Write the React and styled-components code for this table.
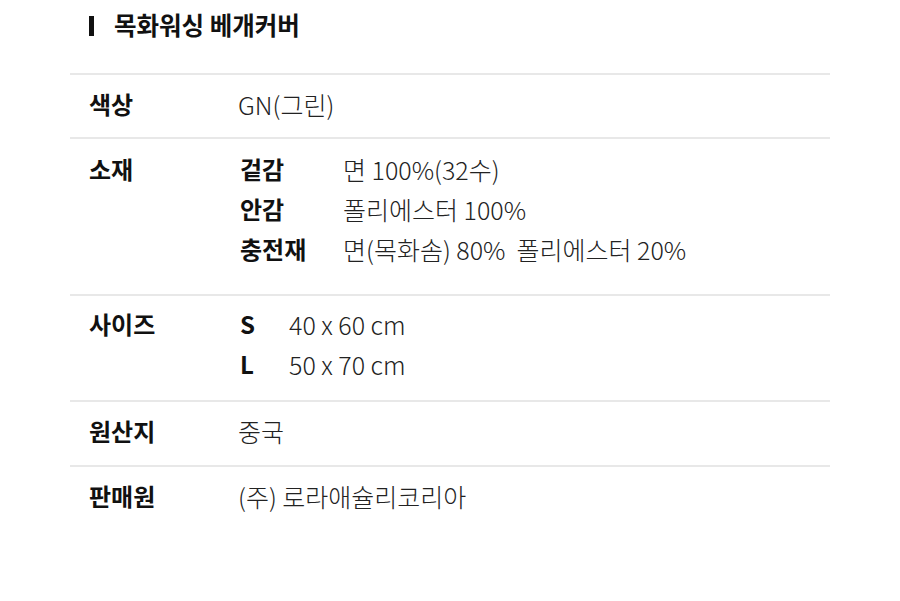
import React from "react";
import styled, { createGlobalStyle } from "styled-components";

const GlobalStyle = createGlobalStyle`
  body {
    margin: 0;
    background: #fff;
    font-family: "Noto Sans CJK KR", "Noto Sans", sans-serif;
    color: #111;
  }
`;

const Page = styled.section`
  width: 900px;
  padding: 0 70px;
  box-sizing: border-box;
`;

const Title = styled.h2`
  margin: 0;
  height: 73px;
  display: flex;
  align-items: flex-start;
  padding: 8px 0 0 19px;
  box-sizing: border-box;
  font-size: 24.5px;
  font-weight: 700;
  line-height: 34px;
  color: #111;

  &::before {
    content: "";
    width: 5px;
    height: 20px;
    margin-top: 8px;
    margin-right: 20px;
    background: #111;
  }
`;

const Table = styled.div`
  border-top: 2px solid #e8e8e8;
`;

const Row = styled.div`
  display: grid;
  grid-template-columns: 149px 1fr;
  padding: ${(p) => p.$top || 8}px 19px ${(p) => p.$bottom || 14}px;
  border-bottom: 2px solid #e8e8e8;
  font-size: 24px;
  line-height: 40px;

  &:last-child {
    border-bottom: none;
  }
`;

const Label = styled.div`
  font-weight: 700;
  color: #111;
`;

const Value = styled.div`
  font-size: 25px;
  font-weight: 300;
  color: #222;
  white-space: pre;
`;

const SubList = styled.div`
  display: grid;
  grid-template-columns: ${(p) => p.$col}px 1fr;
  padding-left: ${(p) => p.$indent || 0}px;
`;

const SubLabel = styled.div`
  font-weight: 700;
  color: #111;
`;

const materials = [
  ["겉감", "면 100%(32수)"],
  ["안감", "폴리에스터 100%"],
  ["충전재", "면(목화솜) 80%  폴리에스터 20%"],
];

const sizes = [
  ["S", "40 x 60 cm"],
  ["L", "50 x 70 cm"],
];

export default function App() {
  return (
    <Page>
      <GlobalStyle />
      <Title>목화워싱 베개커버</Title>
      <Table>
        <Row $top={9} $bottom={13}>
          <Label>색상</Label>
          <Value>GN(그린)</Value>
        </Row>
        <Row $top={10} $bottom={25}>
          <Label>소재</Label>
          <SubList $col={103} $indent={2}>
            {materials.map(([k, v]) => (
              <React.Fragment key={k}>
                <SubLabel>{k}</SubLabel>
                <Value>{v}</Value>
              </React.Fragment>
            ))}
          </SubList>
        </Row>
        <Row $bottom={16}>
          <Label>사이즈</Label>
          <SubList $col={49} $indent={2}>
            {sizes.map(([k, v]) => (
              <React.Fragment key={k}>
                <SubLabel>{k}</SubLabel>
                <Value>{v}</Value>
              </React.Fragment>
            ))}
          </SubList>
        </Row>
        <Row $top={9} $bottom={14}>
          <Label>원산지</Label>
          <Value>중국</Value>
        </Row>
        <Row $top={9}>
          <Label>판매원</Label>
          <Value>(주) 로라애슐리코리아</Value>
        </Row>
      </Table>
    </Page>
  );
}
